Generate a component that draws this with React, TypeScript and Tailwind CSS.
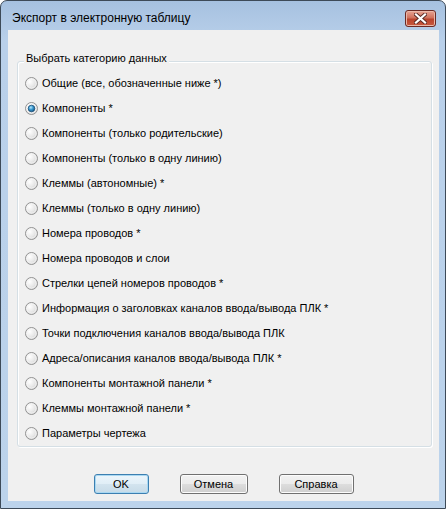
const ITEMS = [
  'Общие (все, обозначенные ниже *)',
  'Компоненты *',
  'Компоненты (только родительские)',
  'Компоненты (только в одну линию)',
  'Клеммы (автономные) *',
  'Клеммы (только в одну линию)',
  'Номера проводов *',
  'Номера проводов и слои',
  'Стрелки цепей номеров проводов *',
  'Информация о заголовках каналов ввода/вывода ПЛК *',
  'Точки подключения каналов ввода/вывода ПЛК',
  'Адреса/описания каналов ввода/вывода ПЛК *',
  'Компоненты монтажной панели *',
  'Клеммы монтажной панели *',
  'Параметры чертежа',
];

function Radio({ checked, id }: { checked: boolean; id: number }) {
  return (
    <svg width="13" height="13" viewBox="0 0 13 13" className="shrink-0">
      <defs>
        <radialGradient id={`rf${id}`} cx="0.35" cy="0.35" r="0.75">
          <stop offset="0" stopColor="#ffffff" />
          <stop offset="0.6" stopColor="#e6e6e6" />
          <stop offset="1" stopColor="#c9c9c9" />
        </radialGradient>
        <radialGradient id={`rd${id}`} cx="0.4" cy="0.35" r="0.7">
          <stop offset="0" stopColor="#b9e8fb" />
          <stop offset="0.45" stopColor="#3c9bd2" />
          <stop offset="1" stopColor="#11507e" />
        </radialGradient>
      </defs>
      <circle cx="6.5" cy="6.5" r="6" fill={`url(#rf${id})`} stroke="#929292" strokeWidth="1" />
      <circle cx="6.5" cy="6.5" r="4.6" fill="none" stroke="#f6f6f6" strokeWidth="0.8" />
      {checked && <circle cx="6.5" cy="6.5" r="3.3" fill={`url(#rd${id})`} stroke="#1b4f79" strokeWidth="0.8" />}
    </svg>
  );
}

function Button({ label, width, primary }: { label: string; width: string; primary?: boolean }) {
  return (
    <button
      className={`${width} h-[20px] rounded-[3px] border text-[11px] leading-none text-black ${
        primary
          ? 'border-[#3c7fb1] bg-[linear-gradient(#ecf5fb,#e0eef7_50%,#d3e4ef_50%,#c7dbe8)] shadow-[inset_0_0_0_1px_#a9d8f2]'
          : 'border-[#707070] bg-[linear-gradient(#f2f2f2,#ebebeb_50%,#dddddd_50%,#cfcfcf)] shadow-[inset_0_0_0_1px_#fcfcfc]'
      }`}
    >
      {label}
    </button>
  );
}

export default function App() {
  return (
    <div className="h-[509px] w-[446px] bg-white font-['Liberation_Sans',Arial,sans-serif]">
      <div className="flex h-full flex-col rounded-t-[7px] border border-[#3d4a58] bg-[linear-gradient(#a6c1e0,#b9d0ea_40px,#bcd3eb)] pb-[7px] pl-[7px] pr-[6px]">
        {/* title bar */}
        <div className="flex h-[29px] items-start justify-between">
          <span className="pl-[4px] pt-[10px] text-[12px] leading-[14px] text-black">
            Экспорт в электронную таблицу
          </span>
          <div className="mr-[3px] mt-[9px] flex h-[17px] w-[31px] items-center justify-center rounded-[3px] border border-[#6b2a24] bg-[linear-gradient(#e8a493,#d0715d_45%,#b9432c_55%,#c85a40)] shadow-[inset_0_0_0_1px_#eab7a8]">
            <svg width="13" height="11" viewBox="0 0 13 11">
              <path d="M2 1.5 L11 9.5 M11 1.5 L2 9.5" stroke="#5b2a24" strokeWidth="4" strokeLinecap="square" />
              <path d="M2 1.5 L11 9.5 M11 1.5 L2 9.5" stroke="#ffffff" strokeWidth="2.2" strokeLinecap="square" />
            </svg>
          </div>
        </div>

        {/* client area */}
        <div className="flex flex-1 flex-col bg-[#f0f0f0] text-[11px] text-black">
          <div className="relative ml-[9px] mr-[7px] mt-[31px] h-[386px] rounded-[3px] border border-[#d5dfe5] pt-[13px] shadow-[inset_1px_1px_0_#ffffff,1px_1px_0_#ffffff]">
            <span className="absolute -top-[10px] left-[6px] bg-[#f0f0f0] px-[2px] leading-[13px]">
              Выбрать категорию данных
            </span>
            <div className="flex flex-col gap-[8px] pl-[7px]">
              {ITEMS.map((item, i) => (
                <label key={item} className="flex h-[17px] items-center gap-[4px]">
                  <Radio checked={i === 1} id={i} />
                  <span className="leading-[13px]">{item}</span>
                </label>
              ))}
            </div>
          </div>

          <div className="mt-[27px] flex justify-center gap-[31px]">
            <Button label="OK" width="w-[55px]" primary />
            <Button label="Отмена" width="w-[68px]" />
            <Button label="Справка" width="w-[75px]" />
          </div>
        </div>
      </div>
    </div>
  );
}
